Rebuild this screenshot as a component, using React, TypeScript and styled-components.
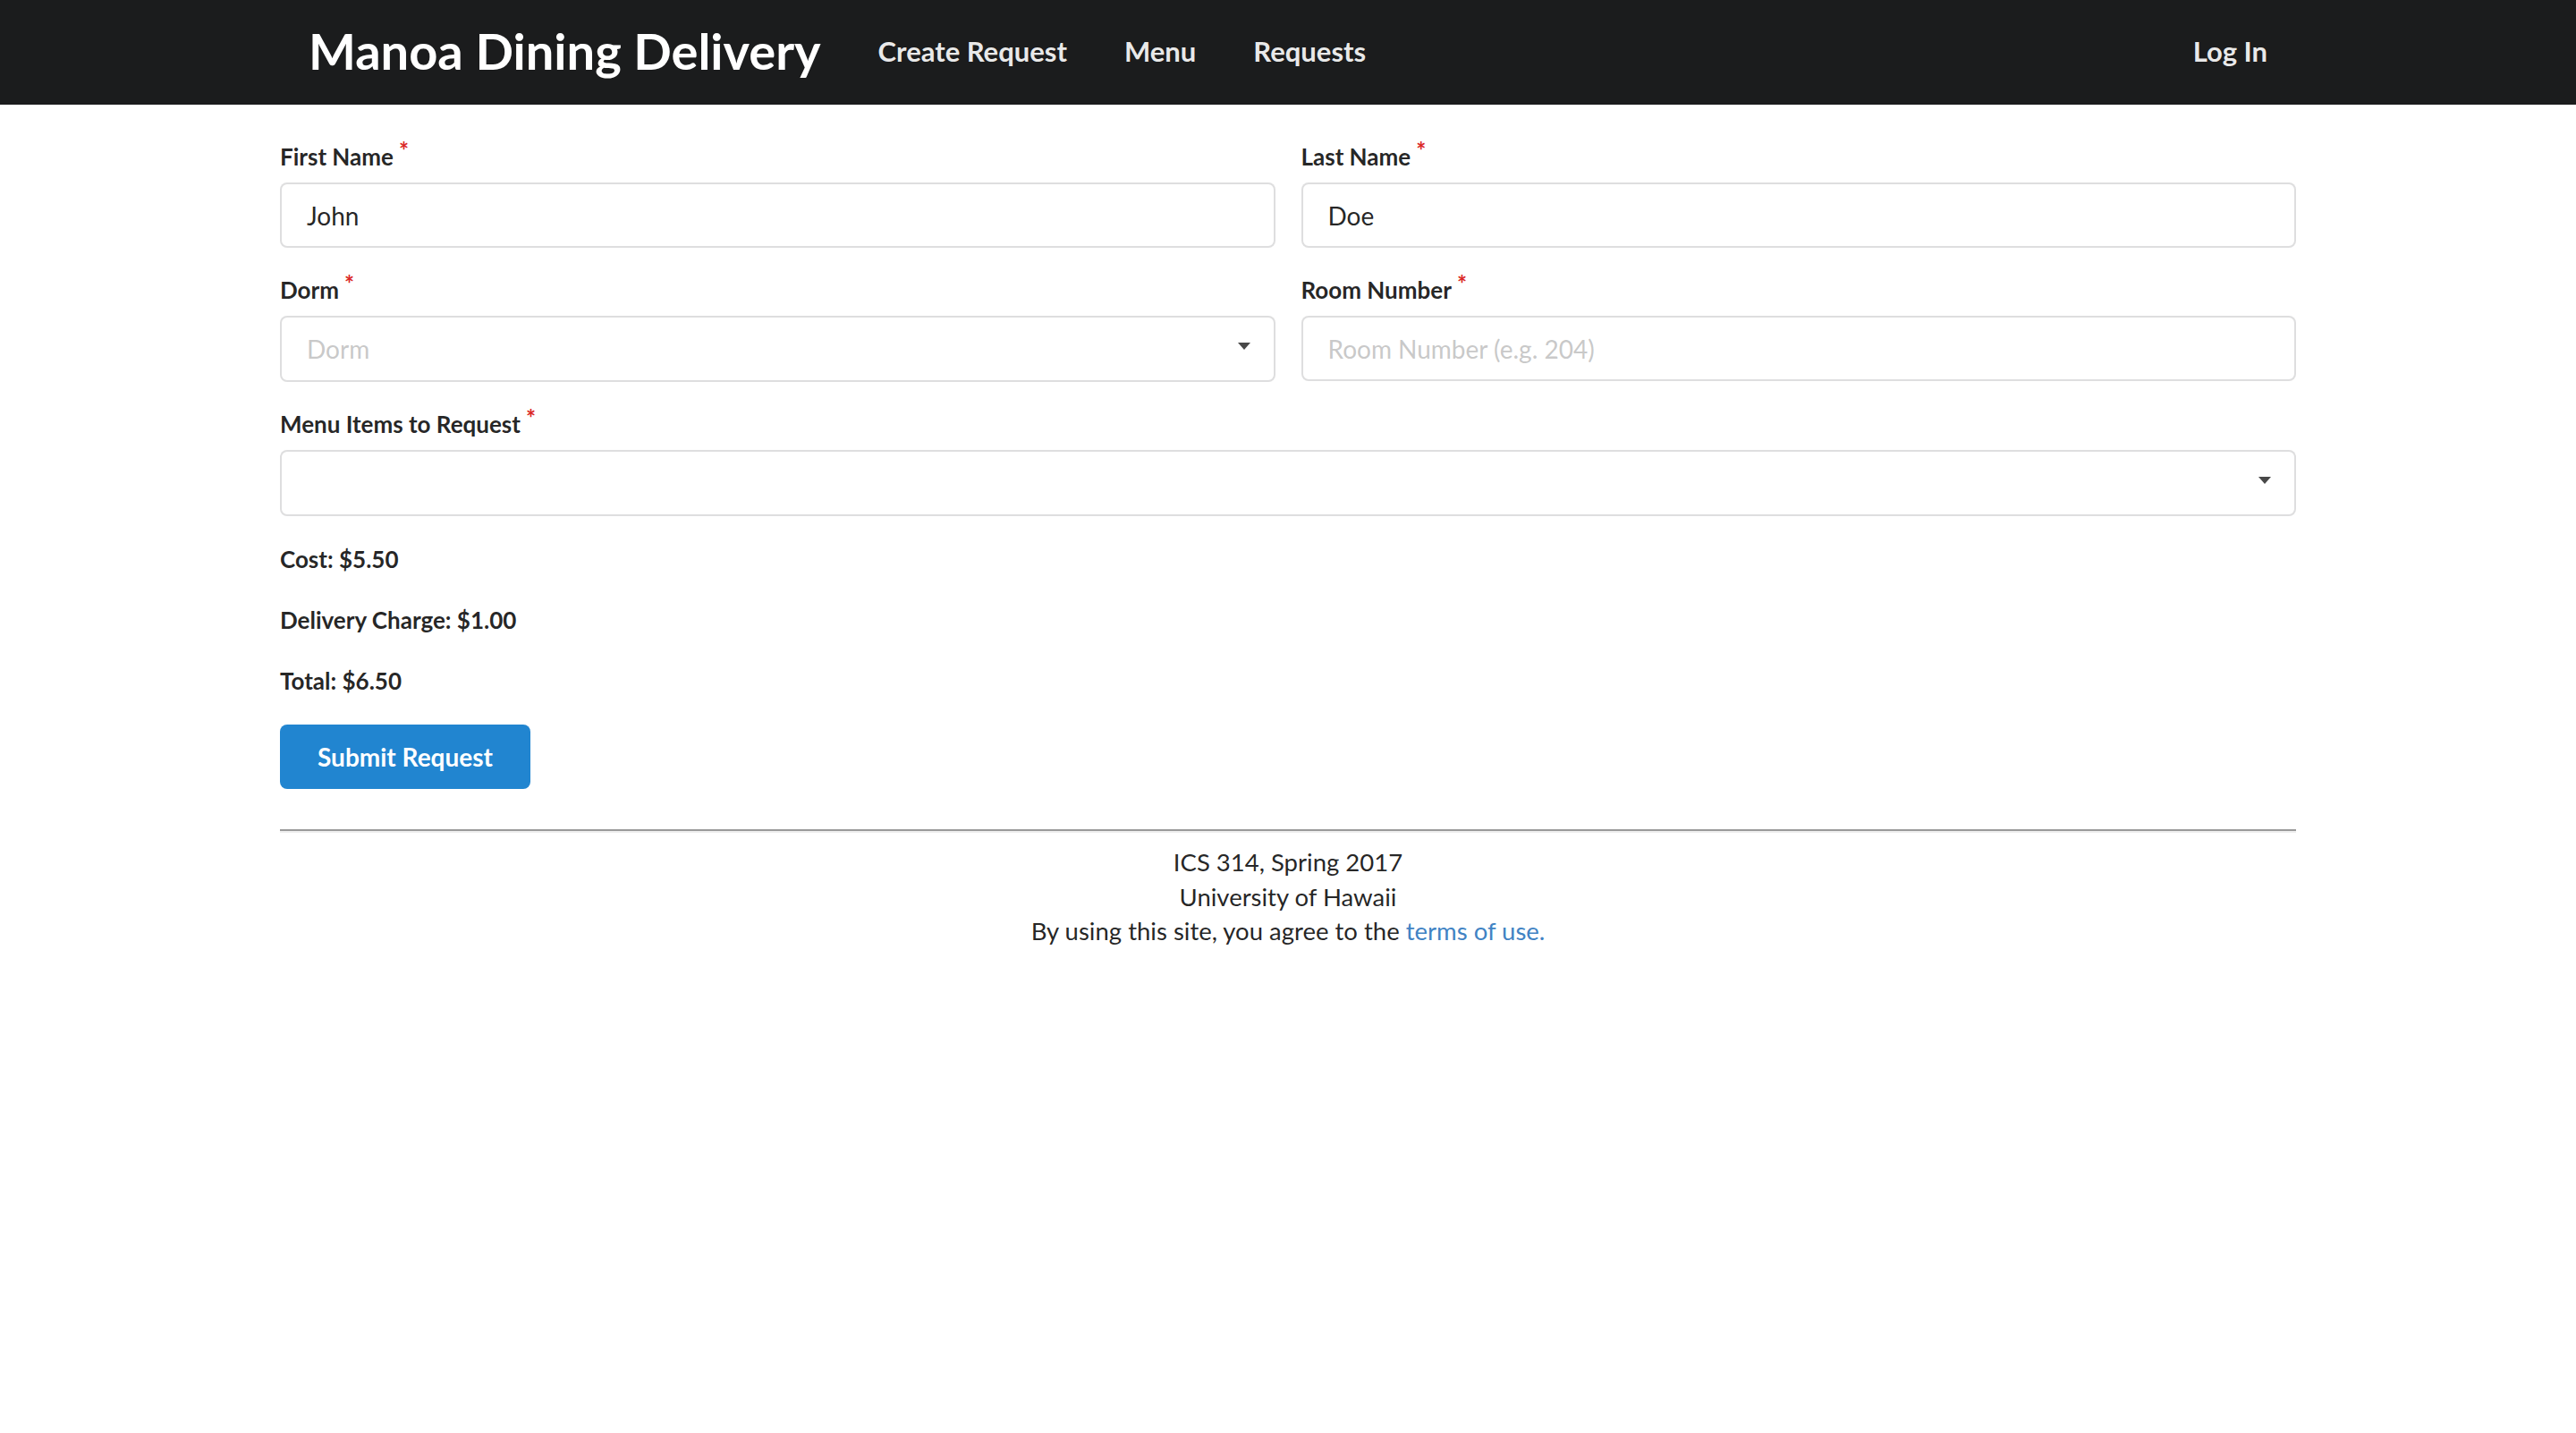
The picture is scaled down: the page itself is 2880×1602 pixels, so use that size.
import React from "react";
import styled, { createGlobalStyle } from "styled-components";

const GlobalStyle = createGlobalStyle`
  html, body {
    margin: 0;
    padding: 0;
    background: #ffffff;
    font-family: Lato, "Helvetica Neue", Arial, Helvetica, sans-serif;
    color: rgba(0, 0, 0, 0.87);
  }
  * { box-sizing: border-box; }
`;

const NavBar = styled.header`
  background: #1b1c1d;
  height: 117px;
`;

const Container = styled.div`
  width: 2254px;
  margin: 0 auto;
`;

const NavInner = styled(Container)`
  display: flex;
  align-items: center;
  height: 100%;
  padding-bottom: 3px;
`;

const Brand = styled.div`
  padding: 0 32px;
  font-size: 56px;
  font-weight: 700;
  color: #ffffff;
  line-height: 1;
  white-space: nowrap;
`;

const NavItem = styled.a<{ $right?: boolean }>`
  padding: 0 32px;
  font-size: 31px;
  font-weight: 700;
  color: rgba(255, 255, 255, 0.92);
  text-decoration: none;
  white-space: nowrap;
  margin-left: ${(p) => (p.$right ? "auto" : "0")};
`;

const Main = styled(Container)`
  display: flex;
  flex-direction: column;
  padding-top: 42px;
`;

const FieldRow = styled.div<{ $cols: number; $gapAfter?: number }>`
  display: grid;
  grid-template-columns: repeat(${(p) => p.$cols}, 1fr);
  column-gap: 29px;
  margin-bottom: ${(p) => (p.$gapAfter ?? 31)}px;
`;

const Field = styled.div`
  display: flex;
  flex-direction: column;
`;

const Label = styled.label`
  font-size: 26px;
  font-weight: 700;
  line-height: 33px;
  height: 33px;
  margin-bottom: 12px;
  color: rgba(0, 0, 0, 0.87);
`;

const Required = styled.span`
  color: #db2828;
  margin-left: 6px;
  vertical-align: top;
  font-size: 26px;
  line-height: 18px;
`;

const TextInput = styled.input`
  height: 73px;
  width: 100%;
  border: 2px solid rgba(34, 36, 38, 0.15);
  border-radius: 8px;
  padding: 0 28px;
  font-family: inherit;
  font-size: 28px;
  color: rgba(0, 0, 0, 0.87);
  outline: none;
  background: #fff;
  &::placeholder {
    color: rgba(191, 191, 191, 0.87);
  }
`;

const SelectBox = styled.div`
  height: 74px;
  border: 2px solid rgba(34, 36, 38, 0.15);
  border-radius: 8px;
  padding: 0 26px 0 28px;
  display: flex;
  align-items: center;
  justify-content: space-between;
  font-size: 28px;
  background: #fff;
`;

const Placeholder = styled.span`
  color: rgba(191, 191, 191, 0.87);
`;

const Caret = styled.svg`
  width: 14px;
  height: 8px;
  margin-bottom: 6px;
  flex: none;
`;

const Summary = styled.div`
  display: flex;
  flex-direction: column;
  gap: 31px;
`;

const SummaryLine = styled.div`
  font-size: 26px;
  font-weight: 700;
  line-height: 37px;
`;

const SubmitButton = styled.button`
  align-self: flex-start;
  margin-top: 30px;
  background: #2185d0;
  color: #ffffff;
  border: none;
  border-radius: 8px;
  padding: 22px 42px;
  font-family: inherit;
  font-size: 28px;
  font-weight: 700;
  line-height: 28px;
  cursor: pointer;
`;

const Divider = styled.hr`
  width: 100%;
  margin: 45px 0 0;
  border: none;
  border-top: 2px solid #9a9a9a;
  border-bottom: 2px solid #eeeeee;
  height: 0;
`;

const Footer = styled.footer`
  text-align: center;
  font-size: 27.5px;
  line-height: 38.6px;
  padding-top: 14px;
  color: rgba(0, 0, 0, 0.87);
`;

const FooterLink = styled.a`
  color: #4183c4;
  text-decoration: none;
`;

const CaretIcon = () => (
  <Caret viewBox="0 0 14 8">
    <polygon points="0,0 14,0 7,8" fill="#484848" />
  </Caret>
);

export default function App() {
  return (
    <>
      <GlobalStyle />
      <NavBar>
        <NavInner>
          <Brand>Manoa Dining Delivery</Brand>
          <NavItem>Create Request</NavItem>
          <NavItem>Menu</NavItem>
          <NavItem>Requests</NavItem>
          <NavItem $right>Log In</NavItem>
        </NavInner>
      </NavBar>
      <Main as="main">
        <FieldRow $cols={2}>
          <Field>
            <Label>
              First Name<Required>*</Required>
            </Label>
            <TextInput defaultValue="John" />
          </Field>
          <Field>
            <Label>
              Last Name<Required>*</Required>
            </Label>
            <TextInput defaultValue="Doe" />
          </Field>
        </FieldRow>
        <FieldRow $cols={2}>
          <Field>
            <Label>
              Dorm<Required>*</Required>
            </Label>
            <SelectBox>
              <Placeholder>Dorm</Placeholder>
              <CaretIcon />
            </SelectBox>
          </Field>
          <Field>
            <Label>
              Room Number<Required>*</Required>
            </Label>
            <TextInput placeholder="Room Number (e.g. 204)" />
          </Field>
        </FieldRow>
        <FieldRow $cols={1} $gapAfter={30}>
          <Field>
            <Label>
              Menu Items to Request<Required>*</Required>
            </Label>
            <SelectBox>
              <span />
              <CaretIcon />
            </SelectBox>
          </Field>
        </FieldRow>
        <Summary>
          <SummaryLine>Cost: $5.50</SummaryLine>
          <SummaryLine>Delivery Charge: $1.00</SummaryLine>
          <SummaryLine>Total: $6.50</SummaryLine>
        </Summary>
        <SubmitButton>Submit Request</SubmitButton>
        <Divider />
        <Footer>
          <div>ICS 314, Spring 2017</div>
          <div>University of Hawaii</div>
          <div>
            By using this site, you agree to the <FooterLink>terms of use.</FooterLink>
          </div>
        </Footer>
      </Main>
    </>
  );
}
